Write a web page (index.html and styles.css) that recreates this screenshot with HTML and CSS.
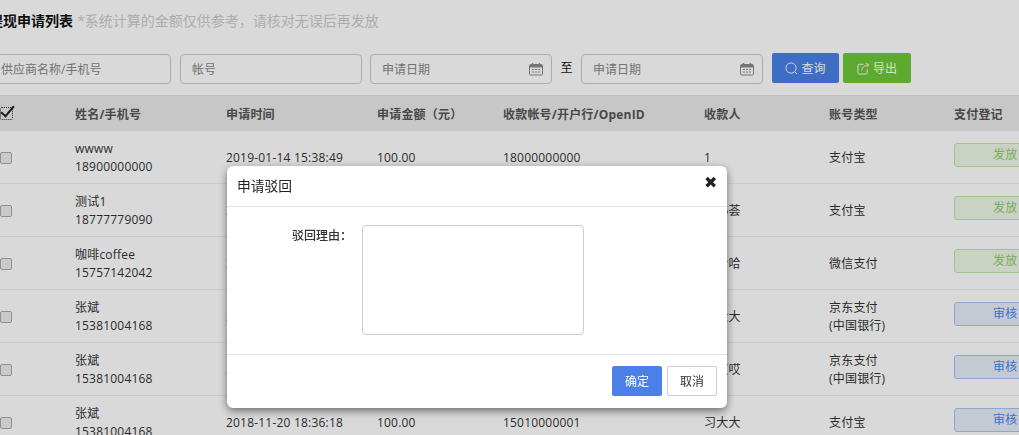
FILE: index.html
```html
<!DOCTYPE html>
<html lang="en">
<head>
    <meta charset="UTF-8">
    <meta name="viewport" content="width=device-width, initial-scale=1.0">
    <title>提现申请列表</title>
    <link rel="stylesheet" href="styles.css">
</head>
<body>
    <div class="page">
        <div class="page-title">
            <span class="title">提现申请列表</span>
            <span class="title-note">*系统计算的金额仅供参考，请核对无误后再发放</span>
        </div>

        <div class="filters">
            <input class="field field-first" placeholder="供应商名称/手机号">
            <input class="field" placeholder="帐号">
            <div class="date-field">
                <input class="field" placeholder="申请日期">
                <svg class="cal-icon" viewBox="0 0 14 14"><path d="M1.5 2.5h11a1 1 0 0 1 1 1v8.500a1 1 0 0 1-1 1h-11a1 1 0 0 1-1-1V3.500a1 1 0 0 1 1-1z" fill="none" stroke="currentColor"/><path d="M1 3h12v2.500H1z" fill="currentColor"/><path d="M3.500 1v2M10.500 1v2" stroke="currentColor" stroke-width="1.500"/><path d="M3 7h2v1H3zM6 7h2v1H6zM9 7h2v1H9zM3 9.500h2v1H3zM6 9.500h2v1H6zM9 9.500h2v1H9z" fill="currentColor"/></svg>
            </div>
            <span class="to">至</span>
            <div class="date-field">
                <input class="field" placeholder="申请日期">
                <svg class="cal-icon" viewBox="0 0 14 14"><path d="M1.5 2.5h11a1 1 0 0 1 1 1v8.500a1 1 0 0 1-1 1h-11a1 1 0 0 1-1-1V3.500a1 1 0 0 1 1-1z" fill="none" stroke="currentColor"/><path d="M1 3h12v2.500H1z" fill="currentColor"/><path d="M3.500 1v2M10.500 1v2" stroke="currentColor" stroke-width="1.500"/><path d="M3 7h2v1H3zM6 7h2v1H6zM9 7h2v1H9zM3 9.500h2v1H3zM6 9.500h2v1H6zM9 9.500h2v1H9z" fill="currentColor"/></svg>
            </div>
            <button class="btn btn-search">
                <svg class="btn-icon" viewBox="0 0 14 14"><circle cx="6.500" cy="6.500" r="5.500" fill="none" stroke="currentColor"/><path d="M10.500 10.500l2.500 2.500" stroke="currentColor"/></svg>
                查询
            </button>
            <button class="btn btn-export">
                <svg class="btn-icon" viewBox="0 0 14 14"><path d="M7 2.500H2.500a1.500 1.500 0 0 0-1.500 1.500v7.500a1.500 1.500 0 0 0 1.500 1.500h7a1.500 1.500 0 0 0 1.500-1.500V8" fill="none" stroke="currentColor"/><path d="M5 9c.5-3 2.500-5 7-6M9.500 1l3 2-2 2.500" fill="none" stroke="currentColor"/></svg>
                导出
            </button>
        </div>

        <table class="list">
            <thead>
                <tr>
                    <th class="col-check"><span class="check-all"></span></th>
                    <th class="col-name">姓名/手机号</th>
                    <th class="col-time">申请时间</th>
                    <th class="col-amount">申请金额（元）</th>
                    <th class="col-account">收款帐号/开户行/OpenID</th>
                    <th class="col-payee">收款人</th>
                    <th class="col-type">账号类型</th>
                    <th class="col-action">支付登记</th>
                </tr>
            </thead>
            <tbody>
                <tr>
                    <td><span class="check"></span></td>
                    <td>wwww<br>18900000000</td>
                    <td>2019-01-14 15:38:49</td>
                    <td>100.00</td>
                    <td>18000000000</td>
                    <td>1</td>
                    <td>支付宝</td>
                    <td><span class="tag tag-green">发放</span></td>
                </tr>
                <tr>
                    <td><span class="check"></span></td>
                    <td>测试1<br>18777779090</td>
                    <td>2019-01-12 10:21:36</td>
                    <td>100.00</td>
                    <td>18777779090</td>
                    <td>王小荟</td>
                    <td>支付宝</td>
                    <td><span class="tag tag-green">发放</span></td>
                </tr>
                <tr>
                    <td><span class="check"></span></td>
                    <td>咖啡coffee<br>15757142042</td>
                    <td>2019-01-10 09:12:05</td>
                    <td>100.00</td>
                    <td>15757142042</td>
                    <td>哈哈哈</td>
                    <td>微信支付</td>
                    <td><span class="tag tag-green">发放</span></td>
                </tr>
                <tr>
                    <td><span class="check"></span></td>
                    <td>张斌<br>15381004168</td>
                    <td>2018-11-20 18:40:11</td>
                    <td>100.00</td>
                    <td>15010000001</td>
                    <td>习大大</td>
                    <td>京东支付<br>(中国银行)</td>
                    <td><span class="tag tag-blue">审核</span></td>
                </tr>
                <tr>
                    <td><span class="check"></span></td>
                    <td>张斌<br>15381004168</td>
                    <td>2018-11-20 18:38:42</td>
                    <td>100.00</td>
                    <td>15010000001</td>
                    <td>哎哎哎</td>
                    <td>京东支付<br>(中国银行)</td>
                    <td><span class="tag tag-blue">审核</span></td>
                </tr>
                <tr>
                    <td><span class="check"></span></td>
                    <td>张斌<br>15381004168</td>
                    <td>2018-11-20 18:36:18</td>
                    <td>100.00</td>
                    <td>15010000001</td>
                    <td>习大大</td>
                    <td>支付宝</td>
                    <td><span class="tag tag-blue">审核</span></td>
                </tr>
            </tbody>
        </table>
    </div>

    <div class="overlay">
        <div class="modal">
            <div class="modal-head">
                <span>申请驳回</span>
                <span class="modal-close">✖</span>
            </div>
            <div class="modal-body">
                <label class="modal-label">驳回理由：</label>
                <textarea class="modal-text"></textarea>
            </div>
            <div class="modal-foot">
                <button class="modal-btn modal-ok">确定</button>
                <button class="modal-btn">取消</button>
            </div>
        </div>
    </div>
</body>
</html>
```
FILE: styles.css
```css
html, body {
    height: 100%;
    margin: 0;
    overflow: hidden;
}

body {
    background-color: #fff;
    color: #333;
    font-family: "Open Sans", "Noto Sans CJK SC", sans-serif;
    font-size: 12px;
}

/* the page is scrolled sideways a bit, so the left edge is cut off */
.page {
    width: 1100px;
    margin-left: -11px;
}

.page-title {
    height: 54px;
    padding-top: 11px;
    box-sizing: border-box;
    line-height: 20px;
}

.title {
    font-size: 14px;
    font-weight: bold;
    color: #111;
}

.title-note {
    font-size: 14px;
    color: #ccc;
    margin-left: 1px;
}

.filters {
    display: flex;
    align-items: flex-start;
    height: 41px;
}

.field {
    width: 182px;
    height: 30px;
    box-sizing: border-box;
    border: 1px solid #ccc;
    border-radius: 4px;
    padding: 0 11px;
    font-family: inherit;
    font-size: 12px;
    background: transparent;
    display: block;
}

.field::placeholder {
    color: #888;
}

.field-first {
    margin-right: 9px;
}

.filters > .field:nth-child(2) {
    margin-right: 8px;
}

.date-field {
    position: relative;
    width: 182px;
}

.cal-icon {
    position: absolute;
    top: 8px;
    right: 9px;
    width: 14px;
    height: 14px;
    color: #8a8a8a;
}

.to {
    width: 29px;
    line-height: 27px;
    text-align: center;
    color: #111;
}

.btn {
    height: 30px;
    margin-top: -1px;
    border: none;
    border-radius: 2px;
    color: #fff;
    font-family: inherit;
    font-size: 12px;
    padding: 0;
    display: flex;
    align-items: center;
    justify-content: center;
    gap: 3px;
}

.btn-icon {
    width: 13px;
    height: 13px;
}

.btn-search {
    width: 67px;
    margin-left: 9px;
    background-color: #4a80e8;
}

.btn-export {
    width: 68px;
    margin-left: 4px;
    background-color: #6fc83a;
}

.list {
    width: 1100px;
    table-layout: fixed;
    border-collapse: collapse;
    letter-spacing: 0.2px;
}

.list th {
    height: 35px;
    padding: 0;
    background-color: #eaeaea;
    border-top: 1px solid #e0e0e0;
    text-align: left;
    font-weight: bold;
    color: #555;
}

.list td {
    height: 50px;
    padding: 2px 0 0;
    line-height: 18px;
    border-bottom: 1px solid #eee;
}

.col-check { width: 86px; }
.col-name { width: 151px; }
.col-time { width: 151px; }
.col-amount { width: 126px; }
.col-account { width: 201px; }
.col-payee { width: 125px; }
.col-type { width: 125px; }

.check-all {
    display: block;
    position: relative;
    width: 13px;
    height: 13px;
    margin-left: 11px;
    box-sizing: border-box;
    border: 1px dotted #333;
    border-radius: 2px;
}

.check-all::after {
    content: "";
    position: absolute;
    left: 3px;
    top: -5px;
    width: 5px;
    height: 12px;
    border-right: 2px solid #222;
    border-bottom: 2px solid #222;
    transform: rotate(40deg);
}

.check {
    display: block;
    width: 12px;
    height: 12px;
    margin: -1px 0 0 11px;
    box-sizing: border-box;
    border: 1px solid #aaa;
    border-radius: 2px;
    background-color: #eee;
}

.tag {
    display: block;
    box-sizing: border-box;
    width: 90px;
    height: 24px;
    margin-top: -7px;
    padding-left: 38px;
    border-radius: 3px;
    line-height: 22px;
}

.tag-green {
    background-color: #eef7e8;
    border: 1px solid #b9e6a0;
    color: #8ccc6a;
}

.tag-blue {
    background-color: #e7eefa;
    border: 1px solid #a6c6f5;
    color: #4a86ee;
}

.overlay {
    position: fixed;
    top: 0;
    left: 0;
    right: 0;
    bottom: 0;
    background-color: rgba(0, 0, 0, 0.15);
}

.modal {
    position: absolute;
    top: 166px;
    left: 227px;
    width: 500px;
    height: 242px;
    background-color: #fff;
    border-radius: 6px;
    box-shadow: 0 3px 9px rgba(0, 0, 0, 0.5);
    display: flex;
    flex-direction: column;
}

.modal-head {
    height: 41px;
    box-sizing: border-box;
    padding: 11px 10px 0;
    display: flex;
    justify-content: space-between;
    border-bottom: 1px solid #e5e5e5;
    font-size: 13.750px;
    color: #222;
    line-height: 18px;
}

.modal-close {
    font-size: 16px;
    line-height: 10px;
    margin-top: 0;
    color: #222;
}

.modal-body {
    flex: 1;
    display: flex;
    padding-top: 18px;
    border-bottom: 1px solid #e5e5e5;
}

.modal-label {
    width: 125px;
    text-align: right;
    line-height: 22px;
    color: #333;
    font-weight: 500;
}

.modal-text {
    width: 222px;
    height: 110px;
    box-sizing: border-box;
    margin-left: 10px;
    border: 1px solid #ccc;
    border-radius: 4px;
    resize: none;
}

.modal-foot {
    height: 53px;
    box-sizing: border-box;
    padding: 11px 10px 0;
    display: flex;
    justify-content: flex-end;
    gap: 5px;
}

.modal-btn {
    width: 50px;
    height: 30px;
    border: 1px solid #ccc;
    border-radius: 2px;
    background-color: #fff;
    color: #333;
    font-family: inherit;
    font-size: 12px;
    padding: 0;
}

.modal-ok {
    background-color: #4a80e8;
    border-color: #4a80e8;
    color: #fff;
}
```
